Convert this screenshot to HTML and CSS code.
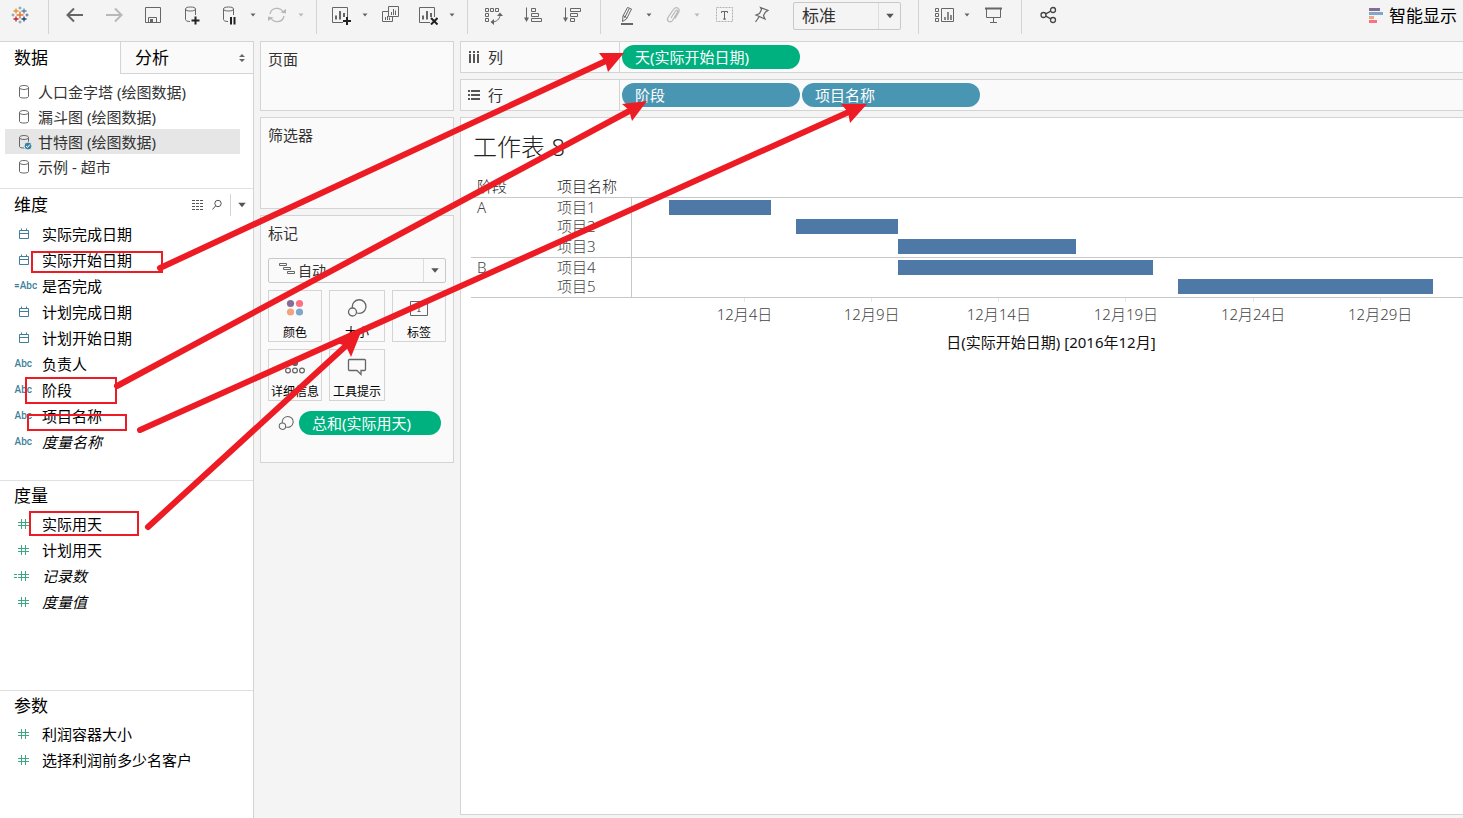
FILE: index.html
```html
<!DOCTYPE html>
<html lang="zh-CN">
<head>
<meta charset="utf-8">
<title>工作表 8</title>
<link rel="stylesheet" href="styles.css">
</head>
<body>
<svg class="defs" width="0" height="0" aria-hidden="true">
  <symbol id="caret" viewBox="0 0 8 8"><path d="M1.500 2.500h5L4 5.500z" fill="currentColor"/></symbol>
  <symbol id="db" viewBox="0 0 16 16"><path d="M3.500 3.500v9c0 1 2 1.500 4.500 1.500s4.500-.5 4.500-1.500v-9M3.500 3.500C3.500 2.300 5.500 1.500 8 1.500s4.500.8 4.500 2-2 2-4.500 2-4.500-.8-4.500-2z" fill="none" stroke="#666"/></symbol>
  <symbol id="date" viewBox="0 0 18 12"><path d="M5.500 2.500h9v8h-9zM5.500 5.500h9M7.500 .5v2M12.500 .5v2" fill="none" stroke="#3f7f9a"/></symbol>
  <symbol id="num" viewBox="0 0 18 12"><path d="M7.500 1v10M11.500 1v10M4 4.500h11M4 7.500h11" fill="none" stroke="#3fa682"/></symbol>
  <symbol id="size" viewBox="0 0 20 20"><path d="M5.500 10A6.800 6.800 0 1 1 10 15" fill="none" stroke="#666" stroke-width="1.300"/><circle cx="5.500" cy="14" r="4" fill="none" stroke="#666" stroke-width="1.300"/></symbol>
</svg>

<header class="toolbar">
  <a class="logo" href="#" aria-label="主页">
    <svg width="18" height="18" viewBox="0 0 18 18" fill="none">
      <path d="M9 5.500v7M5.500 9h7" stroke="#e8762d" stroke-width="1.500"/>
      <path d="M5 2.500v5M2.500 5h5" stroke="#eb912c" stroke-width="1.300"/>
      <path d="M13 2.500v5M10.500 5h5" stroke="#59879b" stroke-width="1.300"/>
      <path d="M5 10.500v5M2.500 13h5" stroke="#c72035" stroke-width="1.300"/>
      <path d="M13 10.500v5M10.500 13h5" stroke="#1f447e" stroke-width="1.300"/>
      <path d="M9 .5v3M7.500 2h3M9 14.500v3M7.500 16h3M2 7.500v3M.5 9h3" stroke="#7199a6"/>
      <path d="M16 7.500v3M14.500 9h3" stroke="#5b6591"/>
    </svg>
  </a>
  <div class="group">
    <button class="tool" aria-label="撤消"><svg width="20" height="20" viewBox="0 0 20 20"><path d="M18 10H3M9 3.500L2.500 10 9 16.500" fill="none" stroke="#666" stroke-width="2"/></svg></button>
    <button class="tool" aria-label="重做"><svg width="20" height="20" viewBox="0 0 20 20"><path d="M2 10h15M11 3.500l6.500 6.500-6.500 6.500" fill="none" stroke="#b8b8b8" stroke-width="2"/></svg></button>
    <button class="tool" aria-label="保存"><svg width="20" height="20" viewBox="0 0 20 20"><path d="M2.500 2.500h15v15h-15zM5.500 17.500v-5h8v5" fill="none" stroke="#666"/><path d="M7 14h3v3.500H7z" fill="#666"/></svg></button>
    <button class="tool" aria-label="新建数据源"><svg width="20" height="20" viewBox="0 0 20 20"><path d="M3.500 4v10.500c0 1 1.500 2 4.500 2M13.500 4v6M3.500 4C3.500 2.600 5.500 2 8.500 2s5 .6 5 2-2 2-5 2-5-.6-5-2z" fill="none" stroke="#666"/><path d="M13.500 11.500v8M9.500 15.500h8" stroke="#222" stroke-width="2"/></svg></button>
    <div class="split"><button class="tool" aria-label="暂停自动更新"><svg width="20" height="20" viewBox="0 0 20 20"><path d="M4.500 4v10.500c0 1 1.500 2 4.500 2M14.500 4v6M4.500 4C4.500 2.600 6.500 2 9.500 2s5 .6 5 2-2 2-5 2-5-.6-5-2z" fill="none" stroke="#666"/><path d="M12 12v7.500M15.500 12v7.500" stroke="#222" stroke-width="2"/></svg></button><button class="drop" aria-label="更多更新选项"><svg><use href="#caret"/></svg></button></div>
    <div class="split off"><button class="tool" aria-label="刷新"><svg width="20" height="20" viewBox="0 0 20 20"><path d="M3 9a7 7 0 0 1 13-2M17 11a7 7 0 0 1-13 2" fill="none" stroke="#b8b8b8" stroke-width="1.300"/><path d="M13.500 7.500l5.500 1V4zM6.500 12.500L1 11.500V16z" fill="#b8b8b8"/></svg></button><button class="drop" aria-label="刷新选项"><svg><use href="#caret"/></svg></button></div>
  </div>
  <div class="group">
    <div class="split"><button class="tool" aria-label="新建工作表"><svg width="20" height="20" viewBox="0 0 20 20"><path d="M12 17.500H1.500v-15h15V12" fill="none" stroke="#666"/><path d="M5 10.500v4M9 6v8.500M13 8v4" stroke="#666" stroke-width="2"/><path d="M16 12v8M12 16h8" stroke="#222" stroke-width="2"/></svg></button><button class="drop" aria-label="新建选项"><svg><use href="#caret"/></svg></button></div>
    <button class="tool" aria-label="复制工作表"><svg width="20" height="20" viewBox="0 0 20 20"><path d="M7.500 1.500h10v10h-10zM7.500 6.500h-6v10h10v-5M10.500 7v3M12.500 4v6M14.500 5.500V10M4.500 12v3M6.500 11v4M8.500 12.500V15" fill="none" stroke="#666"/></svg></button>
    <div class="split"><button class="tool" aria-label="清除工作表"><svg width="20" height="20" viewBox="0 0 20 20"><path d="M12 17.500H1.500v-15h15V12" fill="none" stroke="#666"/><path d="M5 10.500v4M9 6v8.500M13 8v4" stroke="#666" stroke-width="2"/><path d="M13 13l6.500 6.500M19.500 13L13 19.500" stroke="#222" stroke-width="2"/></svg></button><button class="drop" aria-label="清除选项"><svg><use href="#caret"/></svg></button></div>
  </div>
  <div class="group">
    <button class="tool" aria-label="交换行和列"><svg width="20" height="20" viewBox="0 0 20 20" fill="none" stroke="#666"><path d="M1.500 3.500h3v3h-3zM6.500 3.500h3v3h-3zM11.500 3.500h3v3h-3zM1.500 8.500h3v3h-3zM1.500 13.500h3v3h-3zM8 17c4.500 0 8-3 8-7"/><path d="M13 11l3-3.500 3 3.500zM10 14L6.500 17l3.500 3z" fill="#666" stroke="none"/></svg></button>
    <button class="tool" aria-label="升序排序"><svg width="20" height="20" viewBox="0 0 20 20" fill="none" stroke="#666"><path d="M3.500 2.500V14"/><path d="M1 12.500h5L3.500 17z" fill="#666" stroke="none"/><path d="M8.500 3.500h4v3h-4zM8.500 8.500h7v3h-7zM8.500 13.500h10v3h-10z"/></svg></button>
    <button class="tool" aria-label="降序排序"><svg width="20" height="20" viewBox="0 0 20 20" fill="none" stroke="#666"><path d="M3.500 2.500V14"/><path d="M1 12.500h5L3.500 17z" fill="#666" stroke="none"/><path d="M8.500 3.500h10v3h-10zM8.500 8.500h7v3h-7zM8.500 13.500h4v3h-4z"/></svg></button>
  </div>
  <div class="group">
    <div class="split"><button class="tool" aria-label="突出显示"><svg width="20" height="20" viewBox="0 0 20 20" fill="none" stroke="#666"><path d="M12.500 2.500l4 1.500-5 10-4 2.500 .5-5.500zM8 10.500l3.500 2M14 4l-4.500 9"/><path d="M6 19h12" stroke-width="2"/></svg></button><button class="drop" aria-label="突出显示选项"><svg><use href="#caret"/></svg></button></div>
    <div class="split off"><button class="tool" aria-label="组成员"><svg width="20" height="20" viewBox="0 0 20 20"><path d="M8 13l4.500-7c1-2 3-.5 2 1.200L9.500 15.500C7.500 18.500 3 16 5 12.500L10 5c3-4.500 8-1.500 5.500 2.500L12 13.500" fill="none" stroke="#b8b8b8" stroke-width="1.200"/></svg></button><button class="drop" aria-label="组选项"><svg><use href="#caret"/></svg></button></div>
    <button class="tool" aria-label="显示标记标签"><svg width="20" height="20" viewBox="0 0 20 20" fill="none"><path d="M3.500 2.500h16v14h-16z" stroke="#b0b0b0" stroke-dasharray="2 1"/><path d="M8.500 8V6.500h6V8M11.500 6.500v8M10 14h3" stroke="#666"/></svg></button>
    <button class="tool" aria-label="固定轴"><svg width="20" height="20" viewBox="0 0 20 20" fill="none" stroke="#666" stroke-width="1.200"><path d="M8.500 2.500l7.500 3-1.500 1-1 .5-2 3.500 1.500 3.500L4 10 7.500 8.500l2-4zM7 12L3.500 17"/></svg></button>
    <label class="fit"><select aria-label="适合"><option>标准</option></select><svg class="fit-arrow"><use href="#caret"/></svg></label>
  </div>
  <div class="group">
    <div class="split"><button class="tool" aria-label="显示/隐藏卡"><svg width="22" height="20" viewBox="0 0 22 20" fill="none" stroke="#666"><path d="M3.500 3.500h3v3h-3zM3.500 8.500h3v3h-3zM3.500 13.500h3v3h-3zM9.500 3.500h12v13h-12z"/><path d="M13 12v3M16 7v8M19 10v5" stroke-width="1.500"/></svg></button><button class="drop" aria-label="卡选项"><svg><use href="#caret"/></svg></button></div>
    <button class="tool" aria-label="演示模式"><svg width="20" height="20" viewBox="0 0 20 20" fill="none" stroke="#666"><path d="M3.500 4v8.500h14V4M10.500 12.500v5M7 17.500h7"/><path d="M2 3.500h17" stroke-width="2"/></svg></button>
  </div>
  <div class="group">
    <button class="tool" aria-label="共享"><svg width="20" height="20" viewBox="0 0 20 20" fill="none" stroke="#444" stroke-width="1.300"><circle cx="5.500" cy="10" r="2.500"/><circle cx="15" cy="5" r="2.500"/><circle cx="15" cy="15" r="2.500"/><path d="M7.800 8.800l5-2.600M7.800 11.200l5 2.600"/></svg></button>
  </div>
  <button class="showme"><svg width="14" height="16" viewBox="0 0 14 16"><path d="M0 0h11v3H0z" fill="#866d95"/><path d="M0 4h14v3H0z" fill="#80a6cc"/><path d="M0 8h5v3H0z" fill="#f2a47e"/><path d="M0 12h8v3H0z" fill="#fc7181"/></svg>智能显示</button>
</header>

<div class="workspace">
  <aside class="sidebar">
    <div class="tabs">
      <button class="tab active">数据</button>
      <button class="tab">分析<svg width="8" height="10" viewBox="0 0 8 10"><path d="M1 4l3-3 3 3zM1 6l3 3 3-3z" fill="#666"/></svg></button>
    </div>
    <ul class="sources">
      <li><button class="source"><svg><use href="#db"/></svg>人口金字塔 (绘图数据)</button></li>
      <li><button class="source"><svg><use href="#db"/></svg>漏斗图 (绘图数据)</button></li>
      <li><button class="source selected"><svg viewBox="0 0 16 16"><use href="#db"/><circle cx="12" cy="12" r="4" fill="#3a82a3" stroke="#e6e6e6"/><path d="M10 12l1.500 1.500 2.500-3" fill="none" stroke="#fff"/></svg>甘特图 (绘图数据)</button></li>
      <li><button class="source"><svg><use href="#db"/></svg>示例 - 超市</button></li>
    </ul>
    <section class="fields dimensions">
      <div class="head">
        <h2>维度</h2>
        <button class="mini" aria-label="查看数据"><svg width="12" height="12" viewBox="0 0 12 12"><path d="M0 1.500h12M0 4.500h12M0 7.500h12M0 10.500h12" stroke="#555" stroke-dasharray="3 1"/></svg></button>
        <button class="mini" aria-label="查找字段"><svg width="12" height="12" viewBox="0 0 12 12" fill="none" stroke="#555"><circle cx="7" cy="4.500" r="3.200"/><path d="M4.500 7L1.500 10.500"/></svg></button>
        <button class="mini menu" aria-label="维度菜单"><svg class="big-caret"><use href="#caret"/></svg></button>
      </div>
      <ul>
        <li><button class="field"><svg><use href="#date"/></svg>实际完成日期</button></li>
        <li><button class="field"><svg><use href="#date"/></svg>实际开始日期</button></li>
        <li><button class="field"><span class="abc">=Abc</span>是否完成</button></li>
        <li><button class="field"><svg><use href="#date"/></svg>计划完成日期</button></li>
        <li><button class="field"><svg><use href="#date"/></svg>计划开始日期</button></li>
        <li><button class="field"><span class="abc">Abc</span>负责人</button></li>
        <li><button class="field"><span class="abc">Abc</span>阶段</button></li>
        <li><button class="field"><span class="abc">Abc</span>项目名称</button></li>
        <li><button class="field"><span class="abc">Abc</span><i>度量名称</i></button></li>
      </ul>
    </section>
    <section class="fields measures">
      <div class="head"><h2>度量</h2></div>
      <ul>
        <li><button class="field"><svg><use href="#num"/></svg>实际用天</button></li>
        <li><button class="field"><svg><use href="#num"/></svg>计划用天</button></li>
        <li><button class="field"><svg viewBox="0 0 18 12"><use href="#num"/><path d="M0 4.500h3M0 7.500h3" stroke="#3fa682"/></svg><i>记录数</i></button></li>
        <li><button class="field"><svg><use href="#num"/></svg><i>度量值</i></button></li>
      </ul>
    </section>
    <section class="fields">
      <div class="head"><h2>参数</h2></div>
      <ul>
        <li><button class="field"><svg><use href="#num"/></svg>利润容器大小</button></li>
        <li><button class="field"><svg><use href="#num"/></svg>选择利润前多少名客户</button></li>
      </ul>
    </section>
  </aside>

  <div class="cards">
    <section class="card pages"><h3>页面</h3></section>
    <section class="card filters"><h3>筛选器</h3></section>
    <section class="card marks">
      <h3>标记</h3>
      <label class="marktype">
        <svg class="gantt" width="17" height="12" viewBox="0 0 17 12" fill="none" stroke="#666"><path d="M.5 .5h7v2h-7zM4.500 4.500h7v2h-7zM8.500 8.500h7v2h-7z"/></svg>
        <select aria-label="标记类型"><option>自动</option></select>
        <svg class="fit-arrow"><use href="#caret"/></svg>
      </label>
      <div class="encodings">
        <button><svg viewBox="0 0 20 20"><circle cx="5.500" cy="5.500" r="3.600" fill="#866d95"/><circle cx="14.500" cy="5.500" r="3.600" fill="#fc7181"/><circle cx="5.500" cy="14" r="3.600" fill="#f2a47e"/><circle cx="14.500" cy="14" r="3.600" fill="#80a6cc"/></svg>颜色</button>
        <button><svg><use href="#size"/></svg>大小</button>
        <button><svg viewBox="0 0 20 20" fill="none" stroke="#666"><path d="M1.500 3.500h17v14h-17z"/><path d="M7 8V6.500h6V8M10 6.500v7M8.500 13.500h3"/></svg>标签</button>
        <button><svg viewBox="0 0 20 20" fill="none" stroke="#666" stroke-width="1.200"><circle cx="10" cy="6" r="2.500" fill="#666"/><circle cx="3" cy="13.500" r="2.400"/><circle cx="10" cy="13.500" r="2.400"/><circle cx="17" cy="13.500" r="2.400"/></svg>详细信息</button>
        <button><svg viewBox="0 0 20 20" fill="none" stroke="#666" stroke-width="1.300"><path d="M2.500 2.500h15a1 1 0 0 1 1 1v9a1 1 0 0 1-1 1H14V17.500L10 13.500H2.500a1 1 0 0 1-1-1v-9a1 1 0 0 1 1-1z"/></svg>工具提示</button>
      </div>
      <div class="markpill"><svg><use href="#size"/></svg><button class="pill green">总和(实际用天)</button></div>
    </section>
  </div>

  <main class="view">
    <div class="shelf"><span class="shelf-name"><svg width="12" height="12" viewBox="0 0 12 12"><path d="M2 0v2M6 0v2M10 0v2M2 3v9M6 3v9M10 3v9" stroke="#555" stroke-width="2"/></svg>列</span><button class="pill green">天(实际开始日期)</button></div>
    <div class="shelf"><span class="shelf-name"><svg width="12" height="12" viewBox="0 0 12 12"><path d="M0 2h2M0 6h2M0 10h2M3 2h9M3 6h9M3 10h9" stroke="#555" stroke-width="2"/></svg>行</span><button class="pill blue">阶段</button><button class="pill blue">项目名称</button></div>
    <section class="sheet">
      <h1>工作表 8</h1>
      <table class="chart">
        <colgroup><col class="c-stage"><col class="c-name"><col></colgroup>
        <thead><tr><th>阶段</th><th>项目名称</th><th></th></tr></thead>
        <tbody>
          <tr><th rowspan="3">A</th><td>项目1</td><td class="plot"><div class="bar" style="margin-left:4.45%;width:12.27%"></div></td></tr>
          <tr><td>项目2</td><td class="plot"><div class="bar" style="margin-left:19.74%;width:12.27%"></div></td></tr>
          <tr><td>项目3</td><td class="plot"><div class="bar" style="margin-left:32.01%;width:21.42%"></div></td></tr>
        </tbody>
        <tbody>
          <tr><th rowspan="2">B</th><td>项目4</td><td class="plot"><div class="bar" style="margin-left:32.01%;width:30.69%"></div></td></tr>
          <tr><td>项目5</td><td class="plot"><div class="bar" style="margin-left:65.7%;width:30.69%"></div></td></tr>
        </tbody>
      </table>
      <div class="axis">
        <div class="ticks"><span>12月4日</span><span>12月9日</span><span>12月14日</span><span>12月19日</span><span>12月24日</span><span>12月29日</span></div>
        <p class="axis-title">日(实际开始日期) [2016年12月]</p>
      </div>
    </section>
  </main>
</div>

<svg class="notes" width="900" height="560" viewBox="0 0 900 560" aria-hidden="true">
  <g fill="none" stroke="#ed1c24" stroke-width="2">
    <path d="M32 252h130v20H32zM26 378h90v25H26zM28 415h98v15H28zM30 512h108v23H30z"/>
  </g>
  <g fill="none" stroke="#ed1c24" stroke-width="6" stroke-linecap="round">
    <path d="M160 268L608 60M117 386L633 109M140 430L851 111M148 527L349 343"/>
  </g>
  <path d="M624 53l-25 0 6 8 3 11zM647 101l-25 3 7 6 3 11zM867 104l-26 0 7 8 2 11zM361 332l-24 11 9 3 5 11z" fill="#ed1c24"/>
</svg>
</body>
</html>
```
FILE: styles.css
```css
* { box-sizing: border-box; }
body {
  margin: 0;
  height: 100vh;
  display: flex;
  flex-direction: column;
  overflow: hidden;
  background: #f4f4f4;
  color: #333;
  font-family: "Noto Sans", "Noto Sans CJK SC", sans-serif;
  font-size: 15px;
  line-height: 20px;
}
h1, h2, h3, p, ul { margin: 0; padding: 0; font-weight: 400; }
ul { list-style: none; }
button, select { font: inherit; color: inherit; background: none; border: 0; padding: 0; margin: 0; }
svg { flex: none; }
.defs { position: absolute; }

/* toolbar */
.toolbar { display: flex; height: 41px; flex: none; }
.logo { width: 48px; padding: 6px 0 0 11px; }
.group {
  display: flex;
  height: 34px;
  padding: 0 9px 0 6px;
  border-left: 1px solid #d4d4d4;
}
.tool { width: 39px; height: 30px; display: flex; align-items: center; justify-content: center; }
.split { display: flex; color: #666; }
.split .tool { width: 36px; }
.split.off { color: #b8b8b8; }
.drop { width: 12px; height: 30px; display: flex; align-items: center; justify-content: center; }
.drop svg { width: 8px; height: 8px; }
.fit { position: relative; display: flex; width: 108px; height: 28px; margin: 2px 8px 0 12px; }
select {
  appearance: none;
  width: 100%;
  border: 1px solid #c8c8c8;
  border-radius: 2px;
}
.fit select { padding-left: 8px; font-size: 17px; }
.fit-arrow {
  position: absolute;
  right: 0;
  top: 1px;
  bottom: 1px;
  width: 23px;
  height: calc(100% - 2px);
  padding: 0 5px;
  border-left: 1px solid #dcdcdc;
  color: #555;
}
.showme { display: flex; align-items: center; gap: 6px; height: 31px; margin-left: auto; margin-right: 6px; font-size: 17px; color: #000; }

/* panes */
.workspace { display: flex; flex: 1; min-height: 0; gap: 6px; }
.sidebar { width: 254px; flex: none; background: #fff; border: solid #d4d4d4; border-width: 1px 1px 0 0; }
.tabs { display: flex; height: 32px; }
.tab { width: 120px; padding: 0 7px 0 14px; text-align: left; font-size: 17px; color: #000; }
.tab + .tab {
  flex: 1;
  display: flex;
  align-items: center;
  justify-content: space-between;
  background: #fafafa;
  border: solid #d4d4d4;
  border-width: 0 0 1px 1px;
}
.sources { padding: 5px 13px 9px 5px; border-bottom: 1px solid #e0e0e0; }
.source { display: flex; align-items: center; gap: 6px; width: 100%; height: 25px; padding-left: 11px; }
.source svg { width: 16px; height: 16px; }
.source.selected { background: #e6e6e6; }
.fields { color: #000; }
.dimensions { padding-bottom: 25px; border-bottom: 1px solid #e0e0e0; }
.measures { padding-bottom: 75px; border-bottom: 1px solid #e0e0e0; }
.head { display: flex; align-items: center; height: 30px; padding-left: 14px; }
.dimensions .head { height: 32px; }
.head h2 { flex: 1; font-size: 17px; }
.mini { display: flex; margin-right: 7px; }
.mini.menu { margin: 0; height: 22px; width: 23px; align-items: center; justify-content: center; border-left: 1px solid #d4d4d4; color: #555; }
.big-caret { width: 12px; height: 12px; }
.field { display: flex; align-items: center; width: 100%; height: 26px; padding-left: 14px; white-space: nowrap; }
.field svg { width: 18px; height: 12px; margin-right: 10px; }
.abc { width: 28px; flex: none; padding-right: 10px; text-align: right; font: 500 10px/14px Roboto, sans-serif; color: #3f7f9a; }

/* cards */
.cards { width: 194px; flex: none; display: flex; flex-direction: column; gap: 6px; }
.card { padding: 7px; background: #fafafa; border: 1px solid #d4d4d4; }
.card h3 { font-size: 15px; }
.pages { height: 70px; }
.filters { height: 92px; }
.marks { height: 248px; }
.marktype { position: relative; display: flex; height: 25px; margin: 15px 0 7px; }
.marktype select { padding-left: 29px; font-size: 14px; line-height: 20px; }
.gantt { position: absolute; left: 11px; top: 5px; }
.encodings { display: grid; grid-template-columns: 54px 56px 54px; gap: 7px; }
.encodings button {
  display: flex;
  flex-direction: column;
  align-items: center;
  gap: 5px;
  height: 52px;
  padding-top: 7px;
  border: 1px solid #d4d4d4;
  font-size: 12px;
  line-height: 20px;
  color: #000;
  white-space: nowrap;
}
.encodings svg { width: 20px; height: 20px; }
.markpill { display: flex; align-items: center; gap: 5px; margin: 10px 5px 0 10px; }
.markpill svg { width: 16px; height: 16px; }
.markpill .pill { flex: 1; }
.pill { height: 24px; padding: 0 13px; border-radius: 12px; text-align: left; color: #fff; }
.green { background: #00b180; }
.blue { background: #4996b2; }

/* view */
.view { flex: 1; min-width: 0; display: flex; flex-direction: column; gap: 6px; }
.shelf { display: flex; align-items: center; gap: 2px; height: 32px; background: #fafafa; border: 1px solid #d4d4d4; border-right: 0; flex: none; }
.shelf-name { display: flex; align-items: center; gap: 8px; width: 159px; height: 100%; padding-left: 7px; border-right: 1px solid #d4d4d4; }
.shelf .pill { width: 178px; }
.sheet { flex: 1; margin-bottom: 3px; padding: 13px 0 0 10px; background: #fff; border: 1px solid #d4d4d4; border-right: 0; font-weight: 300; color: #444; }
.sheet h1 { padding-left: 2px; font-size: 24px; line-height: 32px; font-weight: 300; color: #222; }
.chart { width: 100%; margin-top: 14px; table-layout: fixed; border-collapse: collapse; }
.c-stage { width: 80px; }
.c-name { width: 80px; }
.chart th, .chart td { height: 20px; padding: 0 0 0 6px; font-weight: 300; text-align: left; vertical-align: top; line-height: 19px; }
.chart thead th { color: #222; }
.chart tbody { border: solid #c8c8c8; border-width: 1px 0; }
.chart td.plot { padding: 2px 0 0; border-left: 1px solid #c8c8c8; }
.bar { height: 15px; background: #4e79a7; }
.axis { margin-left: 160px; }
.ticks { display: flex; margin-right: 2px; padding-left: 6%; }
.ticks span { width: 16.3%; flex: none; text-align: center; }
.ticks span::before { content: ""; display: block; width: 1px; height: 4px; margin: 0 auto 2px; background: #e6e6e6; }
.axis-title { margin-top: 8px; padding-left: 8px; text-align: center; color: #111; }

/* annotation layer over the whole workspace */
.notes { position: absolute; left: 0; top: 0; pointer-events: none; }
```
